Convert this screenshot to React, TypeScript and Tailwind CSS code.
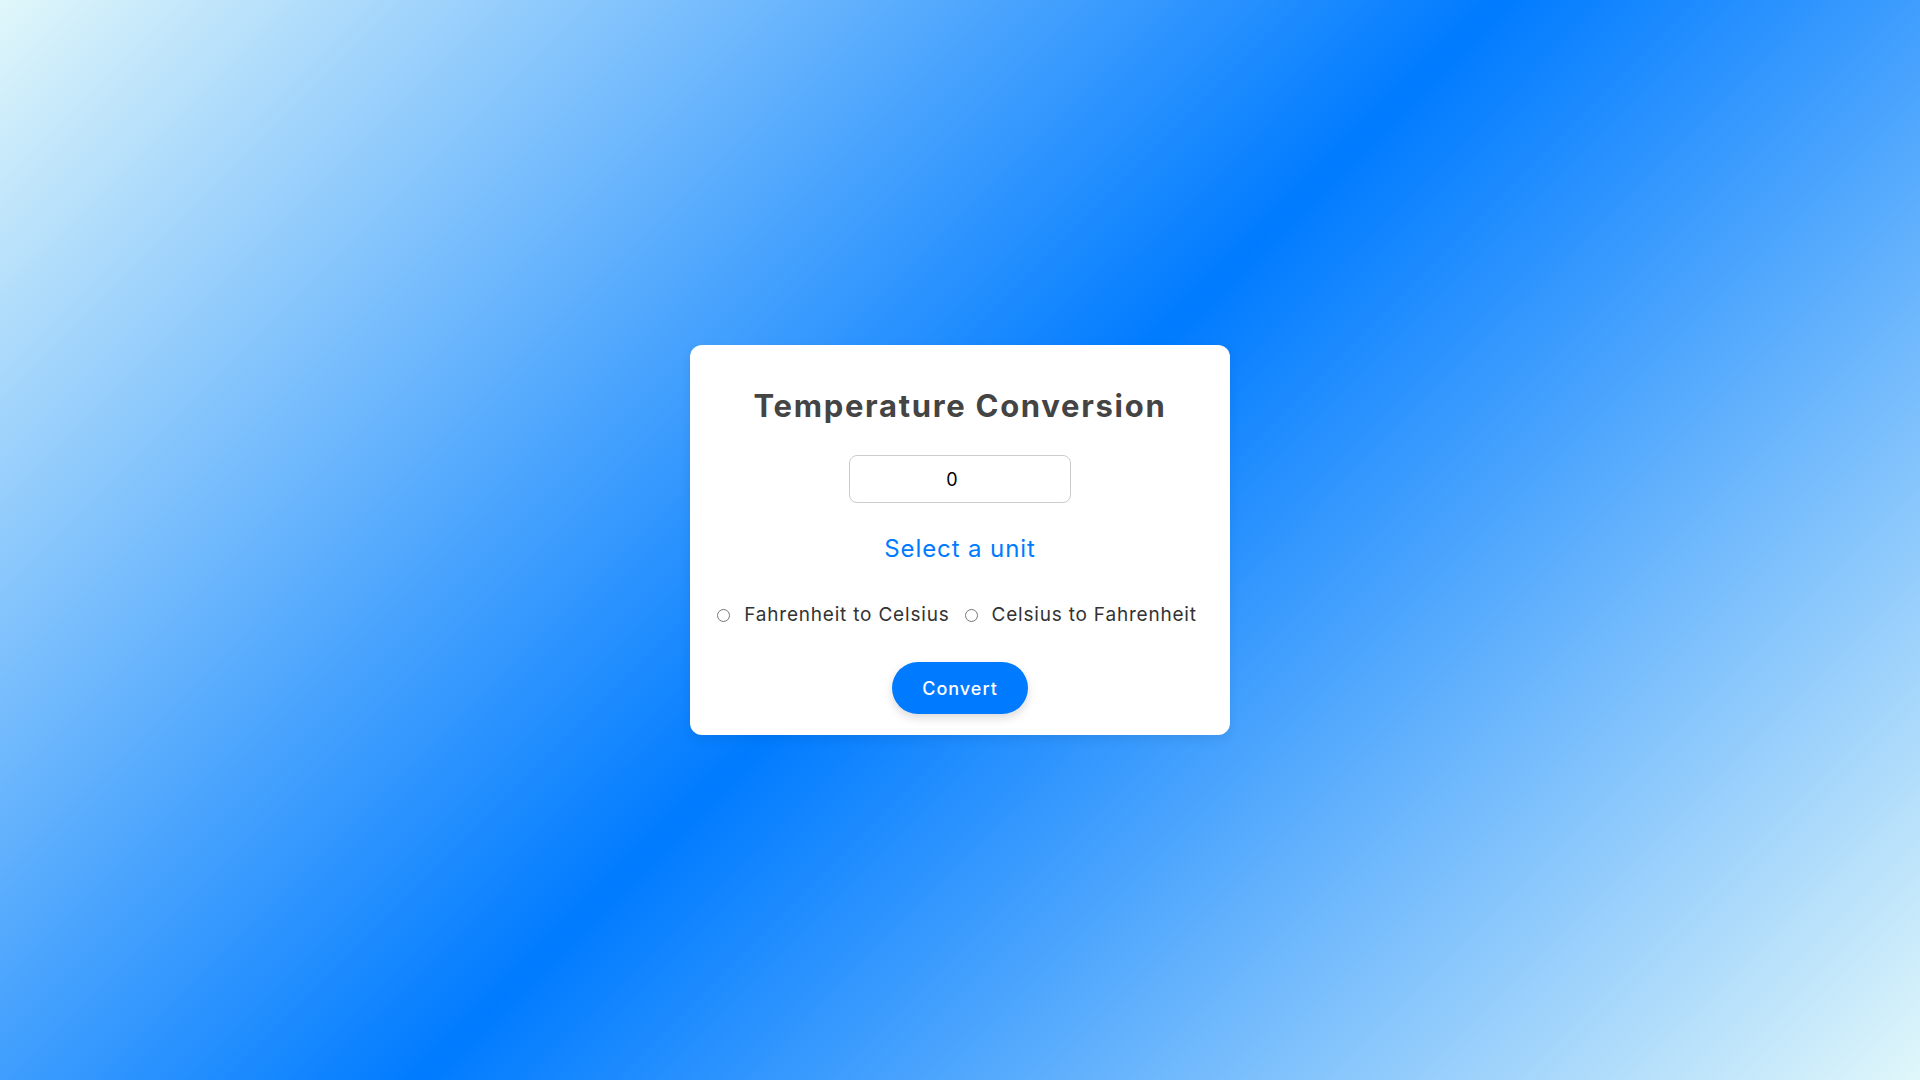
import React, { useState } from 'react';

const App: React.FC = () => {
  const [value, setValue] = useState('0');
  const [unit, setUnit] = useState('');

  return (
    <div className="min-h-screen w-full flex items-center justify-center bg-[linear-gradient(135deg,#e0f7fa,#007bff,#e0f7fa)] font-['Inter',sans-serif]">
      <div className="w-[540px] h-[390px] bg-white rounded-xl flex flex-col items-center pt-[41px] shadow-[0_4px_12px_rgba(0,0,0,0.08)]">
        <h1 className="h-10 leading-10 text-[31px] font-bold text-[#444] tracking-[1.7px]">
          Temperature Conversion
        </h1>

        <input
          type="text"
          value={value}
          onChange={(e) => setValue(e.target.value)}
          className="mt-[29px] w-[222px] h-12 border border-[#ccc] rounded-lg text-center text-lg text-black outline-none pr-[16px]"
        />

        <h2 className="mt-[31px] h-[30px] leading-[30px] text-[24px] text-[#007bff] font-normal tracking-[0.9px]">
          Select a unit
        </h2>

        <div className="mt-[39px] h-6 flex items-center text-[19px] text-[#333] tracking-[0.8px] pr-[6px]">
          <label className="flex items-center">
            <input
              type="radio"
              name="unit"
              checked={unit === 'f2c'}
              onChange={() => setUnit('f2c')}
              className="m-0 w-[13px] h-[13px]"
            />
            <span className="ml-[14px]">Fahrenheit to Celsius</span>
          </label>
          <label className="flex items-center ml-[15px]">
            <input
              type="radio"
              name="unit"
              checked={unit === 'c2f'}
              onChange={() => setUnit('c2f')}
              className="m-0 w-[13px] h-[13px]"
            />
            <span className="ml-[14px]">Celsius to Fahrenheit</span>
          </label>
        </div>

        <button className="mt-[35px] w-[136px] h-[52px] rounded-full bg-[#007bff] text-white text-[18px] font-medium tracking-[1px] shadow-[0_4px_10px_rgba(0,0,0,0.15)]">
          Convert
        </button>
      </div>
    </div>
  );
};

export default App;
